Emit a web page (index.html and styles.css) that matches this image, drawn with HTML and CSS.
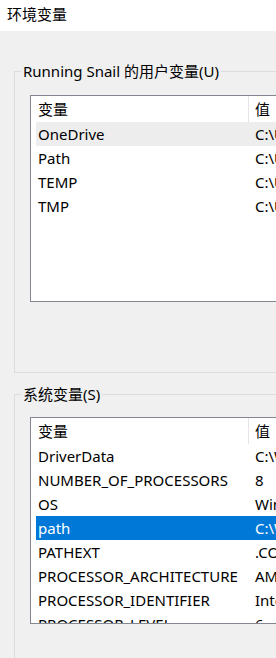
FILE: index.html
```html
<!DOCTYPE html>
<html lang="zh-CN">
<head>
  <meta charset="UTF-8">
  <title>环境变量</title>
  <link rel="stylesheet" href="styles.css">
</head>
<body>

<div class="titlebar">环境变量</div>

<div class="content">
  <!-- 用户变量 -->
  <fieldset class="group">
    <legend>Running Snail 的用户变量(U)</legend>
    <div class="list">
      <div class="head">
        <div class="col-name">变量</div>
        <div class="col-val">值</div>
      </div>
      <div class="row hover"><div class="col-name">OneDrive</div><div class="col-val">C:\Users\Running Snail\OneDrive</div></div>
      <div class="row"><div class="col-name">Path</div><div class="col-val">C:\Users\Running Snail\AppData\Local\Microsoft\WindowsApps;</div></div>
      <div class="row"><div class="col-name">TEMP</div><div class="col-val">C:\Users\Running Snail\AppData\Local\Temp</div></div>
      <div class="row"><div class="col-name">TMP</div><div class="col-val">C:\Users\Running Snail\AppData\Local\Temp</div></div>
    </div>
  </fieldset>

  <!-- 系统变量 -->
  <fieldset class="group sys">
    <legend>系统变量(S)</legend>
    <div class="list">
      <div class="head">
        <div class="col-name">变量</div>
        <div class="col-val">值</div>
      </div>
      <div class="row"><div class="col-name">DriverData</div><div class="col-val">C:\Windows\System32\Drivers\DriverData</div></div>
      <div class="row"><div class="col-name">NUMBER_OF_PROCESSORS</div><div class="col-val">8</div></div>
      <div class="row"><div class="col-name">OS</div><div class="col-val">Windows_NT</div></div>
      <div class="row selected"><div class="col-name">path</div><div class="col-val">C:\Windows\system32;C:\Windows</div></div>
      <div class="row"><div class="col-name">PATHEXT</div><div class="col-val">.COM;.EXE;.BAT;.CMD;.VBS</div></div>
      <div class="row"><div class="col-name">PROCESSOR_ARCHITECTURE</div><div class="col-val">AMD64</div></div>
      <div class="row"><div class="col-name">PROCESSOR_IDENTIFIER</div><div class="col-val">Intel64 Family 6 Model 142</div></div>
      <div class="row"><div class="col-name">PROCESSOR_LEVEL</div><div class="col-val">6</div></div>
    </div>
  </fieldset>
</div>

</body>
</html>
```

FILE: styles.css
```css
* {
  box-sizing: border-box;
}

html, body {
  overflow: hidden;
}

body {
  margin: 0;
  background-color: #f0f0f0;
  font-family: "Noto Sans", "Noto Sans CJK SC", sans-serif;
  font-size: 15px;
  color: #000;
}

.titlebar {
  height: 31px;
  background-color: #fff;
  padding: 4px 0 0 7px;
  line-height: 20px;
}

.content {
  width: 600px;
  padding: 30px 0 0 14px;
}

.group {
  margin: 0;
  padding: 14px 0 70px 15px;
  border: 1px solid #dcdcdc;
  min-width: 0;
}

.group legend {
  margin-left: -9px;
  padding: 0 2px;
  line-height: 20px;
}

.group.sys {
  margin-top: 11px;
  padding-top: 13px;
  padding-bottom: 200px;
}

.list {
  width: 500px;
  height: 207px;
  overflow: hidden;
  background-color: #fff;
  border: 1px solid #828790;
}

.head {
  display: flex;
  height: 26px;
  line-height: 26px;
}

.head .col-name {
  flex: none;
  width: 218px;
  padding-left: 7px;
  border-right: 1px solid #e5e5e5;
}

.head .col-val {
  padding-left: 6px;
}

.row {
  display: flex;
  margin-left: 5px;
  height: 24px;
  line-height: 24px;
  white-space: nowrap;
}

.row .col-name {
  flex: none;
  width: 213px;
  padding-left: 2px;
}

.row .col-val {
  padding-left: 6px;
}

.row.hover {
  background-color: #ededed;
}

.row.selected {
  background-color: #0078d7;
  color: #fff;
}
```
